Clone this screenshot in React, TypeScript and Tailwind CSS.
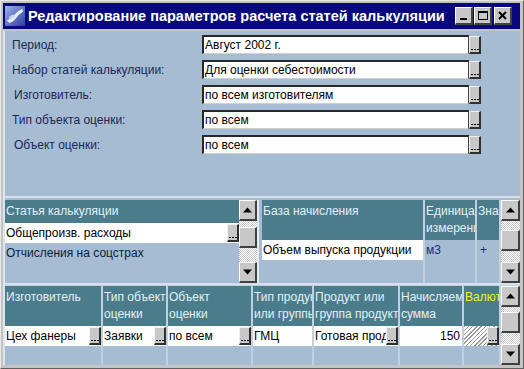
import React from "react";

const FONT = "font-[family-name:'Liberation_Sans',Arial,sans-serif]";

function Dots({ h = "h-[18px]" }: { h?: string }) {
  return (
    <div
      className={`w-[12px] ${h} shrink-0 bg-[#c8c8c8] border-t border-l border-t-[#f0f0f0] border-l-[#f0f0f0] border-r-2 border-b-2 border-r-[#303030] border-b-[#303030] flex items-end justify-center pb-[2px] gap-[1px]`}
    >
      <span className="w-[2px] h-[1px] bg-black" />
      <span className="w-[2px] h-[1px] bg-black" />
      <span className="w-[2px] h-[1px] bg-black" />
    </div>
  );
}

function Arrow({ up }: { up?: boolean }) {
  return (
    <svg width="9" height="6" viewBox="0 0 9 6">
      {up ? <path d="M0 5.5 L4.5 0.5 L9 5.5 Z" fill="#000" /> : <path d="M0 0.5 L4.5 5.5 L9 0.5 Z" fill="#000" />}
    </svg>
  );
}

function SBtn({ children, h = "h-[21px]" }: { children?: React.ReactNode; h?: string }) {
  return (
    <div
      className={`w-full ${h} shrink-0 bg-[#c8c8c8] border-t border-l border-t-white border-l-white border-r-2 border-b-2 border-r-[#404040] border-b-[#404040] flex items-center justify-center`}
    >
      {children}
    </div>
  );
}

function Scroll({ thumbTop, w }: { thumbTop: string; w: string }) {
  return (
    <div className={`${w} shrink-0 h-full flex flex-col bg-[repeating-conic-gradient(#c8c8c8_0_25%,#ffffff_0_50%)] bg-[length:2px_2px]`}>
      <SBtn>
        <Arrow up />
      </SBtn>
      <div className={thumbTop} />
      <SBtn h="h-[21px]" />
      <div className="flex-1" />
      <SBtn>
        <Arrow />
      </SBtn>
    </div>
  );
}

function FormRow({ label, value, indent }: { label: string; value: string; indent?: boolean }) {
  return (
    <div className="flex items-center h-[19px]">
      <div className={`w-[197px] shrink-0 ${indent ? "pl-[9px]" : "pl-[7px]"} text-[12px] text-[#1c2658] leading-none`}>{label}</div>
      <div className="w-[267px] h-[19px] bg-white border-t-2 border-l-2 border-t-[#282828] border-l-[#282828] border-r border-r-[#404040] border-b border-b-[#d0d0d0] flex items-center pl-[1px] text-[12px] text-black leading-none whitespace-nowrap overflow-hidden">
        {value}
      </div>
      <Dots />
    </div>
  );
}

const HEAD = "bg-[#4b7c8c] text-[#e4f0f4] text-[12px] leading-[17px] pl-[1px] whitespace-nowrap overflow-hidden";
const CELL = "flex-1 min-w-0 pl-[1px] text-[12px] text-black whitespace-nowrap overflow-hidden";

export default function App() {
  return (
    <div className={`${FONT} w-[524px] h-[369px] bg-[#c4c4c4] border-t border-l border-t-[#e8e8e8] border-l-[#e8e8e8] border-r border-b border-r-[#606060] border-b-[#606060] pt-[2px] pl-[2px] pr-[3px] pb-[3px] flex flex-col overflow-hidden`}>
      {/* Title bar */}
      <div className="h-[26px] shrink-0 bg-[#08087e] flex items-center pl-[2px] pr-[8px]">
        <svg width="20" height="20" viewBox="0 0 22 22" className="shrink-0">
          <defs>
            <linearGradient id="ig" x1="0" y1="0" x2="1" y2="1">
              <stop offset="0" stopColor="#9fb4e8" />
              <stop offset="1" stopColor="#2a3c9c" />
            </linearGradient>
          </defs>
          <rect x="0" y="0" width="22" height="22" fill="url(#ig)" />
          <path d="M2 16 L8 12 L14 6 L19 3 L20 6 L15 10 L10 16 L5 19 Z" fill="#e8ecf8" />
          <path d="M4 12 L9 9 L11 11 L6 15 Z" fill="#c8d0f0" />
        </svg>
        <div className="ml-[3px] min-w-0 text-white font-bold text-[14.5px] leading-none whitespace-nowrap overflow-hidden">
          Редактирование параметров расчета статей калькуляции
        </div>
        <div className="flex-1" />
        <div className="flex gap-[1px] shrink-0">
          <div className="w-[18px] h-[18px] bg-[#c8c8c8] border-t border-l border-white border-r-2 border-b-2 border-r-[#404040] border-b-[#404040] flex items-end justify-center pb-[3px]">
            <div className="w-[7px] h-[2px] bg-black" />
          </div>
          <div className="w-[18px] h-[18px] bg-[#c8c8c8] border-t border-l border-white border-r-2 border-b-2 border-r-[#404040] border-b-[#404040] flex items-center justify-center">
            <div className="w-[10px] h-[9px] border border-black border-t-2" />
          </div>
          <div className="ml-[1px] w-[18px] h-[18px] bg-[#c8c8c8] border-t border-l border-white border-r-2 border-b-2 border-r-[#404040] border-b-[#404040] flex items-center justify-center">
            <svg width="9" height="9" viewBox="0 0 9 9">
              <path d="M1 1 L8 8 M8 1 L1 8" stroke="#000" strokeWidth="2" />
            </svg>
          </div>
        </div>
      </div>

      {/* Body */}
      <div className="mt-[2px] flex-1 flex flex-col bg-[#a6bcd2] border-l-2 border-l-[#dce4ec]">
        {/* Form */}
        <div className="h-[165px] shrink-0 flex flex-col gap-[6px] pt-[4px]">
          <FormRow label="Период:" value="Август 2002 г." />
          <FormRow label="Набор статей калькуляции:" value="Для оценки себестоимости" />
          <FormRow label="Изготовитель:" value="по всем изготовителям" indent />
          <FormRow label="Тип объекта оценки:" value="по всем" />
          <FormRow label="Объект оценки:" value="по всем" indent />
        </div>

        {/* Grid 1 */}
        <div className="h-[87px] shrink-0 border-t-2 border-t-[#d8e0e8] pt-[2px] flex">
          <div className="w-[234px] shrink-0 flex flex-col">
            <div className={`h-[23px] ${HEAD} pt-[3px]`}>Статья калькуляции</div>
            <div className="h-[20px] flex bg-white items-center">
              <div className={CELL}>Общепроизв. расходы</div>
              <Dots h="h-[18px]" />
            </div>
            <div className="h-[20px] flex items-center pl-[1px] text-[12px] text-[#101c3c] whitespace-nowrap">Отчисления на соцстрах</div>
          </div>
          <Scroll w="w-[18px]" thumbTop="h-[6px]" />
          <div className="w-[5px] shrink-0 border-l-2 border-l-[#e4ecf4]" />
          <div className="flex-1 flex gap-[2px] bg-[#c0d0de]">
            <div className="w-[161px] shrink-0 flex flex-col bg-[#a6bcd2]">
              <div className={`h-[40px] ${HEAD} pt-[3px]`}>База начисления</div>
              <div className="h-[20px] bg-white flex items-center pl-[1px] text-[12px] text-black whitespace-nowrap overflow-hidden">Объем выпуска продукции</div>
            </div>
            <div className="w-[50px] shrink-0 flex flex-col bg-[#a6bcd2]">
              <div className={`h-[40px] ${HEAD} pt-[3px]`}>
                Единица
                <br />
                измерени
              </div>
              <div className="h-[20px] flex items-center pl-[1px] text-[12px] text-[#1a2a8a]">м3</div>
            </div>
            <div className="w-[22px] shrink-0 flex flex-col bg-[#a6bcd2]">
              <div className={`h-[40px] ${HEAD} pt-[3px]`}>Знак</div>
              <div className="h-[20px] flex items-center pl-[3px] text-[12px] text-[#1a2a8a]">+</div>
            </div>
            <Scroll w="w-[19px]" thumbTop="h-[9px]" />
          </div>
        </div>

        {/* Grid 2 */}
        <div className="flex-1 border-t-2 border-t-[#d8e0e8] pt-[1px] flex gap-[2px] bg-[#c0d0de]">
          <div className="w-[96px] shrink-0 flex flex-col bg-[#a6bcd2]">
            <div className={`h-[40px] ${HEAD} pt-[3px]`}>Изготовитель</div>
            <div className="h-[20px] bg-white flex items-center">
              <div className={CELL}>Цех фанеры</div>
              <Dots />
            </div>
          </div>
          <div className="w-[63px] shrink-0 flex flex-col bg-[#a6bcd2]">
            <div className={`h-[40px] ${HEAD} pt-[3px]`}>
              Тип объекта
              <br />
              оценки
            </div>
            <div className="h-[20px] bg-white flex items-center">
              <div className={CELL}>Заявки</div>
              <Dots />
            </div>
          </div>
          <div className="w-[83px] shrink-0 flex flex-col bg-[#a6bcd2]">
            <div className={`h-[40px] ${HEAD} pt-[3px]`}>
              Объект
              <br />
              оценки
            </div>
            <div className="h-[20px] bg-white flex items-center">
              <div className={CELL}>по всем</div>
              <Dots />
            </div>
          </div>
          <div className="w-[59px] shrink-0 flex flex-col bg-[#a6bcd2]">
            <div className={`h-[40px] ${HEAD} pt-[3px]`}>
              Тип продукта
              <br />
              или группы
            </div>
            <div className="h-[20px] bg-white flex items-center pl-[1px] text-[12px] text-black">ГМЦ</div>
          </div>
          <div className="w-[84px] shrink-0 flex flex-col bg-[#a6bcd2]">
            <div className={`h-[40px] ${HEAD} pt-[3px]`}>
              Продукт или
              <br />
              группа продуктов
            </div>
            <div className="h-[20px] bg-white flex items-center">
              <div className={CELL}>Готовая продукция</div>
              <Dots />
            </div>
          </div>
          <div className="w-[62px] shrink-0 flex flex-col bg-[#a6bcd2]">
            <div className={`h-[40px] ${HEAD} pt-[3px]`}>
              Начисляемая
              <br />
              сумма
            </div>
            <div className="h-[20px] bg-white flex items-center justify-end pr-[2px] text-[12px] text-black">150</div>
          </div>
          <div className="w-[35px] shrink-0 flex flex-col bg-[#a6bcd2]">
            <div className={`h-[40px] ${HEAD} pt-[3px] text-[#f0f020]`}>Валюта</div>
            <div className="h-[20px] flex items-center bg-[repeating-linear-gradient(135deg,#9a9a9a_0_1px,#ffffff_1px_3px)]">
              <div className="flex-1" />
              <Dots />
            </div>
          </div>
          <Scroll w="w-[19px]" thumbTop="h-[5px]" />
        </div>
      </div>
    </div>
  );
}
